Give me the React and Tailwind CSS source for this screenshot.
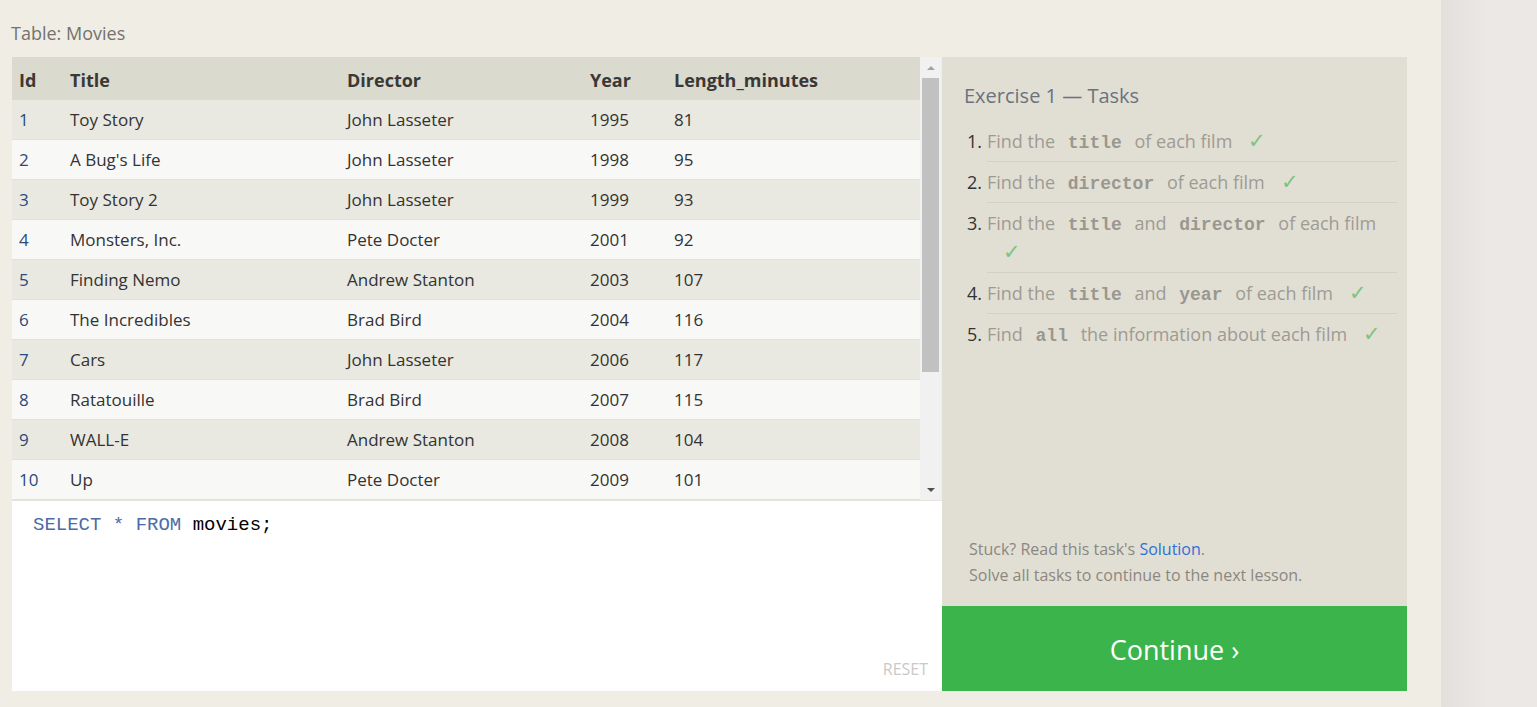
import React from 'react';

const movies = [
  [1, 'Toy Story', 'John Lasseter', 1995, 81],
  [2, "A Bug's Life", 'John Lasseter', 1998, 95],
  [3, 'Toy Story 2', 'John Lasseter', 1999, 93],
  [4, 'Monsters, Inc.', 'Pete Docter', 2001, 92],
  [5, 'Finding Nemo', 'Andrew Stanton', 2003, 107],
  [6, 'The Incredibles', 'Brad Bird', 2004, 116],
  [7, 'Cars', 'John Lasseter', 2006, 117],
  [8, 'Ratatouille', 'Brad Bird', 2007, 115],
  [9, 'WALL-E', 'Andrew Stanton', 2008, 104],
  [10, 'Up', 'Pete Docter', 2009, 101],
];

const Code = ({ children }) => (
  <code className="font-['Liberation_Mono',monospace] font-bold text-[18px] leading-none text-[#9a978f] px-[8px]">{children}</code>
);

const Check = () => <span className="text-[#7cc47f] text-[21px] leading-none ml-[16px]">✓</span>;

const tasks = [
  <>Find the <Code>title</Code> of each film<Check /></>,
  <>Find the <Code>director</Code> of each film<Check /></>,
  <>Find the <Code>title</Code> and <Code>director</Code> of each film<br /><Check /></>,
  <>Find the <Code>title</Code> and <Code>year</Code> of each film<Check /></>,
  <>Find <Code>all</Code> the information about each film<Check /></>,
];

export default function App() {
  return (
    <div className="flex w-[1537px] h-[707px] overflow-hidden font-['Open_Sans',sans-serif]">
      <div className="w-[1441px] h-full bg-[#f0ede5] pl-[12px]">
        <div className="h-[57px] pt-[20px] text-[18px] leading-[26px] text-[#74726e] -ml-[1px]">Table: Movies</div>
        <div className="flex">
          {/* left: table + editor */}
          <div className="w-[930px] flex flex-col">
            <div className="flex h-[443px]">
              <div className="w-[908px] text-[#333] text-[17px]">
                <div className="flex h-[43px] items-center pt-[3px] bg-[#dbdacf] font-bold text-[18px] text-[#3a3835]">
                  <div className="w-[58px] pl-[7px]">Id</div>
                  <div className="w-[277px]">Title</div>
                  <div className="w-[243px]">Director</div>
                  <div className="w-[84px]">Year</div>
                  <div className="flex-1">Length_minutes</div>
                </div>
                {movies.map((m, i) => (
                  <div key={m[0]} className={`flex h-[40px] items-center border-b border-[#e2e1da] ${i % 2 === 0 ? 'bg-[#e9e8e1]' : 'bg-[#f8f8f7]'}`}>
                    <div className="w-[58px] pl-[7px] text-[#2c4a7a]">{m[0]}</div>
                    <div className="w-[277px]">{m[1]}</div>
                    <div className="w-[243px]">{m[2]}</div>
                    <div className="w-[84px]">{m[3]}</div>
                    <div className="flex-1">{m[4]}</div>
                  </div>
                ))}
              </div>
              <div className="w-[21px] bg-[#f1f1f1] flex flex-col items-center">
                <div className="h-[21px] flex items-center justify-center">
                  <div className="w-0 h-0 border-l-[4px] border-r-[4px] border-b-[4px] border-l-transparent border-r-transparent border-b-[#a3a3a3]" />
                </div>
                <div className="w-[17px] h-[294px] bg-[#c1c1c1]" />
                <div className="flex-1" />
                <div className="h-[21px] flex items-center justify-center">
                  <div className="w-0 h-0 border-l-[4px] border-r-[4px] border-t-[4px] border-l-transparent border-r-transparent border-t-[#505050]" />
                </div>
              </div>
            </div>
            <div className="h-[191px] bg-white border-t border-[#e6e4dd] flex flex-col relative">
              <div className="pl-[21px] pt-[11px] font-['Liberation_Mono',monospace] text-[19px] leading-[26px] text-black">
                <span className="text-[#4d6ba6]">SELECT</span> <span className="text-[#4d6ba6]">*</span> <span className="text-[#4d6ba6]">FROM</span> movies;
              </div>
              <div className="absolute right-[14px] bottom-[10px] text-[16px] text-[#c9c9c9]">RESET</div>
            </div>
          </div>
          {/* right: tasks */}
          <div className="w-[465px] h-[634px] bg-[#e1dfd4] flex flex-col">
            <div className="flex-1 pl-[22px] pr-[10px] pt-[25px]">
              <h2 className="text-[20px] leading-[28px] text-[#6a7280]">Exercise 1 — Tasks</h2>
              <ol className="mt-[11px] text-[18px] text-[#9e9b93]">
                {tasks.map((t, i) => (
                  <li key={i} className="flex leading-[29px] pt-[6px]">
                    <span className="w-[23px] pl-[3px] text-[#333]">{i + 1}.</span>
                    <div className={`flex-1 pb-[5px] ${i < tasks.length - 1 ? 'border-b border-[#d4d2c6]' : ''}`}>{t}</div>
                  </li>
                ))}
              </ol>
            </div>
            <div className="pl-[27px] pb-[18px] text-[16px] leading-[26px] text-[#8b8780]">
              <div>Stuck? Read this task's <span className="text-[#2f6fd6]">Solution</span>.</div>
              <div>Solve all tasks to continue to the next lesson.</div>
            </div>
            <div className="h-[85px] pt-[4px] bg-[#3bb54b] flex items-center justify-center text-white text-[27px]">Continue ›</div>
          </div>
        </div>
      </div>
      <div className="flex-1 h-full bg-gradient-to-r from-[#e2dfdc] via-[#ece8e5] to-[#ece8e5]" />
    </div>
  );
}
